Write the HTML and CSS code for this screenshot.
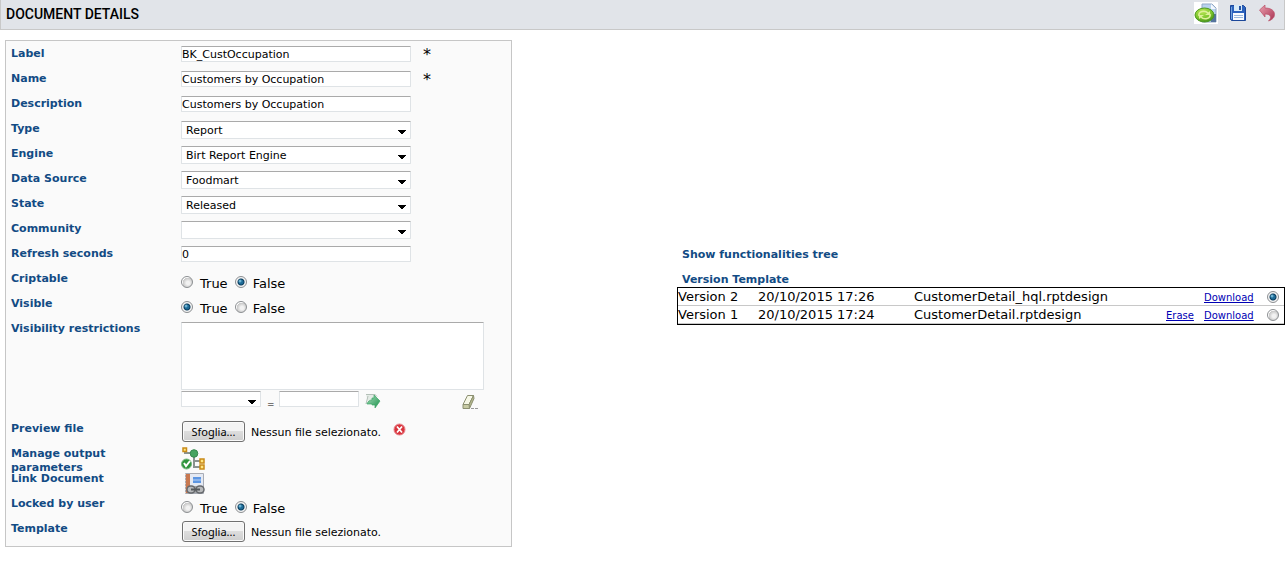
FILE: index.html
```html
<!DOCTYPE html>
<html lang="en">
<head>
<meta charset="utf-8">
<title>Document details</title>
<link rel="stylesheet" href="styles.css">
</head>
<body>
<header class="titlebar">
  <h1 class="title">DOCUMENT DETAILS</h1>
  <div class="toolbar">
    <button class="icon-button" type="button" aria-label="Save and go back">
      <svg width="24" height="22" viewBox="0 0 24 22">
        <defs><radialGradient id="leaf" cx=".4" cy=".25" r=".8"><stop offset="0" stop-color="#b9e653"/><stop offset=".6" stop-color="#7cc52c"/><stop offset="1" stop-color="#3f8a18"/></radialGradient></defs>
        <path fill="#fff" d="M0 0h24v22H0z"/>
        <path fill="#b9d2ee" stroke="#93a9c6" d="M8 2h10l4 4v14H8z"/><path fill="#f3f8fd" d="M17 2v5h5z"/><path fill="#55749d" d="M17 12h5v8h-5z"/>
        <ellipse cx="10.500" cy="13" rx="9.500" ry="7" fill="url(#leaf)" stroke="#4f9a21"/>
        <path fill="none" stroke="#dff09a" stroke-width="1.600" d="M5 14c-1-5 6-6 9-3M16 12c1 5-6 6-9 3"/>
        <path fill="#dff09a" d="M16 9v4h-5zM5 17v-4h5z"/>
      </svg>
    </button>
    <button class="icon-button" type="button" aria-label="Save">
      <svg width="18" height="18" viewBox="0 0 18 18">
        <path fill="#2b62bd" stroke="#1c4799" d="M1.500 1.500h13l2 2v13h-14l-1-1z"/>
        <path fill="#d8ebf8" d="M5 1h8v6H5z"/><path fill="#2954a4" d="M10 2h2v4h-2z"/>
        <path fill="#f8fbff" d="M4 9h11v7H4z"/><path stroke="#9ab8dc" d="M5 11.500h9M5 13.500h9"/><path stroke="#70a2df" d="M2.500 3v12"/>
      </svg>
    </button>
    <button class="icon-button" type="button" aria-label="Back">
      <svg width="18" height="18" viewBox="0 0 18 18">
        <defs><linearGradient id="undo" x2="1" y2="1"><stop stop-color="#eaa0ae"/><stop offset="1" stop-color="#a93152"/></linearGradient></defs>
        <path fill="url(#undo)" stroke="#b95067" stroke-width=".7" d="M1.500 6 7 1v3c6 0 9.500 2.500 9.500 6.500 0 3-2 5-6 6.500 3.500-3.500 2.500-7-3.500-7v3z"/>
      </svg>
    </button>
  </div>
</header>
<main class="layout">
  <form class="panel">
    <div class="row"><label class="caption" for="label">Label</label><div class="field"><input class="text" id="label" value="BK_CustOccupation"><span class="required">*</span></div></div>
    <div class="row"><label class="caption" for="name">Name</label><div class="field"><input class="text" id="name" value="Customers by Occupation"><span class="required">*</span></div></div>
    <div class="row"><label class="caption" for="desc">Description</label><div class="field"><input class="text" id="desc" value="Customers by Occupation"></div></div>
    <div class="row"><label class="caption" for="type">Type</label><div class="field"><select class="select" id="type"><option>Report</option></select></div></div>
    <div class="row"><label class="caption" for="engine">Engine</label><div class="field"><select class="select" id="engine"><option>Birt Report Engine</option></select></div></div>
    <div class="row"><label class="caption" for="source">Data Source</label><div class="field"><select class="select" id="source"><option>Foodmart</option></select></div></div>
    <div class="row"><label class="caption" for="state">State</label><div class="field"><select class="select" id="state"><option>Released</option></select></div></div>
    <div class="row"><label class="caption" for="community">Community</label><div class="field"><select class="select" id="community"><option></option></select></div></div>
    <div class="row"><label class="caption" for="refresh">Refresh seconds</label><div class="field"><input class="text" id="refresh" value="0"></div></div>
    <div class="row" role="group" aria-labelledby="criptable"><span class="caption" id="criptable">Criptable</span><div class="field choices"><label class="choice"><input class="radio" type="radio" name="criptable">True</label><label class="choice"><input class="radio" type="radio" name="criptable" checked>False</label></div></div>
    <div class="row" role="group" aria-labelledby="visible"><span class="caption" id="visible">Visible</span><div class="field choices"><label class="choice"><input class="radio" type="radio" name="visible" checked>True</label><label class="choice"><input class="radio" type="radio" name="visible">False</label></div></div>
    <div class="row restrictions"><label class="caption" for="restrict">Visibility restrictions</label>
      <div class="restriction-editor">
        <textarea class="area" id="restrict"></textarea>
        <div class="criteria">
          <select class="select small" aria-label="Profile attribute"><option></option></select>
          <span class="equals">=</span>
          <input class="text small" aria-label="Attribute value">
          <button class="icon-button" type="button" aria-label="Add restriction">
            <svg width="16" height="16" viewBox="0 0 16 16"><defs><linearGradient id="add" x2="1" y2="1"><stop stop-color="#a9dcbc"/><stop offset="1" stop-color="#19924a"/></linearGradient></defs><path fill="#e4ebe6" d="M1 1h10v9H3z"/><path fill="none" stroke="#b4c0b8" d="M1 1.500h9l2 2M3 3l-2 8"/><path fill="url(#add)" stroke="#3da667" stroke-width=".7" d="M2 11c1-3 3-4 5-4V5h2V2l6 6-5 7V12H7v-1z"/></svg>
          </button>
          <button class="icon-button clear" type="button" aria-label="Clear restrictions">
            <svg width="17" height="16" viewBox="0 0 17 16"><path fill="#f6f7e6" stroke="#8b8f70" d="M6.500 1.500h6L8 10.500H2z"/><path fill="#b4b78c" stroke="#8b8f70" d="m12.500 1.500.5 3-4.500 10-.5-4z"/><path fill="#c8cba4" stroke="#8b8f70" d="M2 10.500h6l.5 4H2z"/><path stroke="#999" stroke-dasharray="3 1" d="M10 14.500h7"/></svg>
          </button>
        </div>
      </div>
    </div>
    <div class="row"><span class="caption">Preview file</span><div class="field file"><button class="browse" type="button">Sfoglia...</button><span class="filename">Nessun file selezionato.</span>
      <button class="icon-button" type="button" aria-label="Remove preview file"><svg width="13" height="13" viewBox="0 0 13 13"><circle cx="6.500" cy="6.500" r="5.500" fill="#d9343d" stroke="#e8838a"/><path fill="none" stroke="#fff" stroke-width="1.700" d="m4 3.500 5 6M9 3.500l-5 6"/></svg></button></div></div>
    <div class="row"><span class="caption">Manage output parameters</span><div class="field"><button class="icon-button" type="button" aria-label="Manage output parameters">
      <svg width="24" height="24" viewBox="0 0 24 24"><path fill="none" stroke="#8a928f" stroke-width="2" d="M4 4v3h9v14h7M13 15h7"/><g fill="#ffe680" stroke="#c98b18" stroke-width="1.500"><path d="M2 2h3.500v3.500H2zM19 13h4v4h-4zM19 19h4v4h-4z"/></g><circle cx="13" cy="7.500" r="3.800" fill="#46a461" stroke="#37894f"/><circle cx="5.500" cy="18" r="5" fill="#2e943c" stroke="#78b77e"/><path fill="none" stroke="#fff" stroke-width="2" d="m3 17 2 3 4-5"/></svg></button></div></div>
    <div class="row"><span class="caption">Link Document</span><div class="field"><button class="icon-button" type="button" aria-label="Link document">
      <svg width="24" height="24" viewBox="0 0 24 24"><path fill="#e4e9f3" stroke="#a8acb5" d="M4.500 2.500h18v20h-18z"/><path fill="#c87850" d="M5 3h4v19H5z"/><path stroke="#ead0c0" stroke-dasharray="1 2" d="M4.500 3v19"/><path fill="#5d96e3" d="M12 6h8v6h-8z"/><path stroke="#bad2f4" d="M12 9h8"/><path fill="#a5a7aa" d="M7 15h15v7H7z"/><g fill="#b8babc" stroke="#66696d" stroke-width="1.500"><rect x="6" y="15" width="8" height="7" rx="3.500"/><rect x="15" y="15" width="8" height="7" rx="3.500"/></g><path stroke="#55585c" stroke-width="2" d="M10 18.500h9"/></svg></button></div></div>
    <div class="row" role="group" aria-labelledby="locked"><span class="caption" id="locked">Locked by user</span><div class="field choices"><label class="choice"><input class="radio" type="radio" name="locked">True</label><label class="choice"><input class="radio" type="radio" name="locked" checked>False</label></div></div>
    <div class="row"><span class="caption">Template</span><div class="field file"><button class="browse" type="button">Sfoglia...</button><span class="filename">Nessun file selezionato.</span></div></div>
  </form>
  <section class="aside">
    <h2 class="heading">Show functionalities tree</h2>
    <h2 class="heading">Version Template</h2>
    <table class="versions">
      <tr><td class="version">Version 2</td><td class="date">20/10/2015 17:26</td><td>CustomerDetail_hql.rptdesign</td><td class="erase"></td><td class="download"><a href="#">Download</a></td><td class="pick"><input class="radio" type="radio" name="version" aria-label="Use version 2" checked></td></tr>
      <tr><td class="version">Version 1</td><td class="date">20/10/2015 17:24</td><td>CustomerDetail.rptdesign</td><td class="erase"><a href="#">Erase</a></td><td class="download"><a href="#">Download</a></td><td class="pick"><input class="radio" type="radio" name="version" aria-label="Use version 1"></td></tr>
    </table>
  </section>
</main>
</body>
</html>
```
FILE: styles.css
```css
* { box-sizing: border-box; }
body { margin: 0; background: #fff; color: #000; font: 11px/14px Verdana, "DejaVu Sans", sans-serif; }
button, input, select, textarea { margin: 0; font: inherit; color: inherit; }

.titlebar { display: flex; align-items: center; justify-content: space-between; height: 30px; padding: 0 8px 2px 5px; background: #e1e4e9; border: solid #c8c8c8; border-width: 0 1px 1px; }
.title { margin: 0; font: 500 14px/16px Roboto, "Liberation Sans", sans-serif; }
.toolbar { display: flex; align-items: center; gap: 11px; padding-bottom: 2px; }
.icon-button { display: block; flex: none; padding: 0; border: 0; background: none; }
.icon-button svg { display: block; }

.layout { display: flex; align-items: flex-start; gap: 165px; padding: 10px 0 0 5px; }
.panel { flex: none; width: 507px; padding-bottom: 5px; background: #fafafa; border: 1px solid #c6c6c6; }
.row { display: grid; grid-template-columns: 170px 1fr; height: 25px; padding: 5px 0 0 5px; }
.caption, .heading { color: #124b84; font-weight: bold; }
.caption { width: 140px; padding-top: 1px; }
.field { display: flex; align-items: flex-start; }
.text, .select, .area { background-color: #fff; border: 1px solid #dfe3e6; border-top-color: #aaa; border-radius: 1px; outline: 0; }
.text { width: 230px; height: 16px; padding: 0; }
.required { margin-left: 12px; font-size: 16px; line-height: 18px; }
.select {
  appearance: none; width: 230px; height: 18px; padding: 1px 18px 0 4px;
  background-image: linear-gradient(to bottom right, #000 50%, transparent 51%), linear-gradient(to bottom left, #000 50%, transparent 51%);
  background-position: right 4px bottom 4px, right 8px bottom 4px;
  background-size: 4px 4px;
  background-repeat: no-repeat;
}

.choices { gap: 5px; padding-top: 5px; font-size: 13px; line-height: 16px; }
.choice { display: flex; align-items: flex-start; gap: 7px; }
.choice + .choice { gap: 6px; padding-left: 2px; }
.radio { appearance: none; display: block; flex: none; width: 12px; height: 12px; border: 1px solid #8b8e91; border-radius: 50%; background: radial-gradient(circle at 60% 60%, #f2f2f2 0 20%, #c6c6c6 60%, #fff 65%); }
.radio:checked { background: radial-gradient(circle at 40% 40%, #9adcf5, transparent 2px), radial-gradient(circle, #1e6c98 0 2px, #0b3c5c 3px, #f4f4f4 4px); }

.restrictions { height: 100px; padding-top: 6px; }
.restrictions .caption { padding-top: 0; }
.restriction-editor { width: 303px; }
.area { display: block; width: 100%; height: 68px; resize: none; }
.criteria { display: flex; align-items: flex-start; padding-top: 1px; }
.small { width: 80px; height: 16px; }
.select.small { background-position: right 4px bottom 2px, right 8px bottom 2px; }
.equals { width: 18px; padding: 6px 0 0 6px; font-size: 9px; line-height: 14px; }
.criteria .icon-button { margin: 2px 0 0 6px; }
.criteria .clear { margin: 3px 6px 0 auto; }

.file { gap: 6px; padding-left: 1px; }
.browse { width: 63px; height: 21px; padding: 0; border: 1px solid #707070; border-radius: 3px; background: linear-gradient(#f3f3f3 0 48%, #dddddd 50%, #cfcfcf); box-shadow: inset 0 0 0 1px #fafafa; font-family: "Noto Sans", sans-serif; }
.filename { padding-top: 5px; }
.file .icon-button { margin: 2px 0 0 6px; }

.aside { flex: 1; padding-top: 208px; }
.heading { margin: 0 0 11px 5px; font-size: 11px; line-height: 14px; }
.heading + .heading { margin-bottom: 0; }
.versions { width: 100%; border: 1px solid #000; border-spacing: 0; font-size: 13px; line-height: 16px; }
.versions td { height: 18px; padding: 1px 0 0; border-bottom: 1px solid #c8c8c8; vertical-align: middle; }
.version { width: 80px; }
.date { width: 156px; }
.erase { width: 38px; }
.download { width: 63px; }
.pick { width: 17px; }
.erase a, .download a { display: block; font-size: 10px; line-height: 15px; color: #0000b4; }
```
